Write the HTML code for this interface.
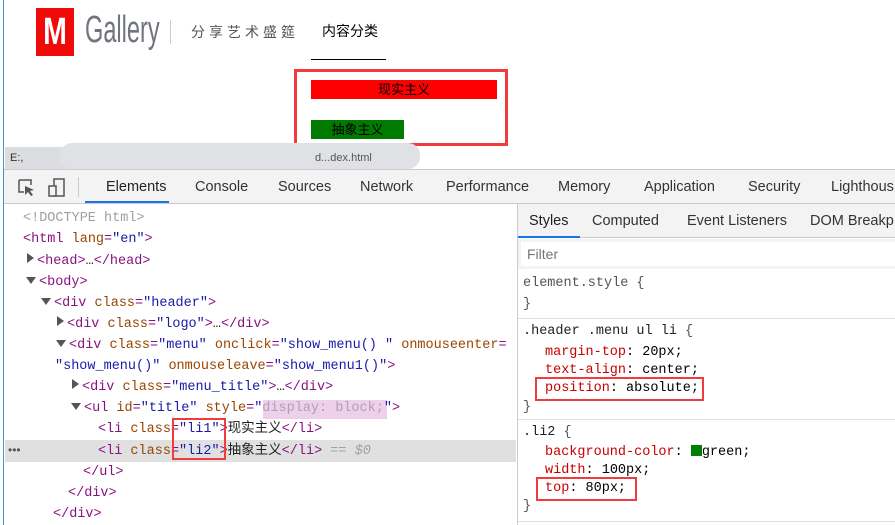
<!DOCTYPE html>
<html><head><meta charset="utf-8"><style>
*{margin:0;padding:0;box-sizing:border-box}
body{width:895px;height:525px;overflow:hidden;background:#fff;position:relative;font-family:"Liberation Sans","Noto Sans CJK SC",sans-serif}
.a{position:absolute;white-space:nowrap}
.m{font-family:"Liberation Mono","Noto Sans CJK SC",monospace;font-size:13.5px;line-height:21px}
.t{color:#881280}.n{color:#994500}.v{color:#1a1aa6}.g{color:#a0a0a0}.k{color:#222}
.p{color:#c80000}
.tab{position:absolute;top:170px;height:34px;line-height:34px;font-size:14.5px;color:#333}
.stab{position:absolute;top:205px;height:33px;line-height:33px;font-size:14.5px;color:#333}
.box{position:absolute;border:2px solid #f03c3c}
.r,.d{display:inline-block;width:0;height:0;vertical-align:1px;margin-right:3px}
.r{border-top:5px solid transparent;border-bottom:5px solid transparent;border-left:7px solid #555}
.d{border-left:5px solid transparent;border-right:5px solid transparent;border-top:7px solid #555}
</style></head><body>
<div class="a" style="left:3px;top:0;width:1px;height:525px;background:#4a90d9"></div>
<!-- header -->
<div class="a" style="left:36px;top:8px;width:38px;height:48px;background:#f00a0a"></div>
<div class="a" style="left:36px;top:8px;width:38px;height:48px;color:#fff;font-size:38px;font-weight:bold;text-align:center;line-height:48px;transform:scaleX(.75)">M</div>
<div class="a" style="left:85px;top:9px;font-size:38px;color:#70747c;transform:scaleX(.62);transform-origin:left">Gallery</div>
<div class="a" style="left:170px;top:20px;width:1px;height:24px;background:#ccc"></div>
<div class="a" style="left:191px;top:22px;font-size:14px;color:#555;letter-spacing:4px">分享艺术盛筵</div>
<div class="a" style="left:322px;top:21px;font-size:14px;color:#000">内容分类</div>
<div class="a" style="left:311px;top:59px;width:75px;height:1px;background:#000"></div>
<div class="box" style="left:294px;top:69px;width:214px;height:77px;border-width:3px"></div>
<div class="a" style="left:311px;top:80px;width:186px;height:19px;background:#f00;font-size:13px;line-height:19px;text-align:center;color:#000">现实主义</div>
<div class="a" style="left:311px;top:120px;width:93px;height:19px;background:#007a00;font-size:13px;line-height:19px;text-align:center;color:#000">抽象主义</div>
<!-- address bar -->
<div class="a" style="left:5px;top:147px;width:392px;height:23px;background:#dcdde0"></div>
<div class="a" style="left:60px;top:143px;width:360px;height:26px;background:#e0e1e4;border-radius:12px"></div>
<div class="a" style="left:10px;top:152px;font-size:11px;color:#333">E:,</div>
<div class="a" style="left:315px;top:152px;font-size:11px;color:#555">d...dex.html</div>
<!-- devtools tabs -->
<div class="a" style="left:4px;top:169px;width:891px;height:35px;background:#f3f3f3;border-top:1px solid #ccc;border-bottom:1px solid #ccc"></div>
<svg class="a" style="left:17px;top:178px" width="20" height="20"><path d="M2 2h12v5M2 2v12h5" fill="none" stroke="#555" stroke-width="1.5"/><path d="M8 8l9 4-4 1 3 4-2 1-3-4-3 3z" fill="#555"/></svg>
<svg class="a" style="left:48px;top:178px" width="20" height="20"><rect x="6" y="1" width="10" height="17" fill="none" stroke="#555" stroke-width="1.5"/><rect x="1" y="8" width="7" height="10" fill="#f3f3f3" stroke="#555" stroke-width="1.5"/></svg>
<div class="a" style="left:78px;top:177px;width:1px;height:20px;background:#ccc"></div>
<div class="tab" style="left:106px;color:#222">Elements</div>
<div class="a" style="left:85px;top:201px;width:84px;height:2px;background:#1a73e8"></div>
<div class="tab" style="left:195px">Console</div>
<div class="tab" style="left:278px">Sources</div>
<div class="tab" style="left:360px">Network</div>
<div class="tab" style="left:446px">Performance</div>
<div class="tab" style="left:558px">Memory</div>
<div class="tab" style="left:644px">Application</div>
<div class="tab" style="left:748px">Security</div>
<div class="tab" style="left:831px">Lighthous</div>
<!-- elements -->
<div class="a" style="left:5px;top:440px;width:511px;height:22px;background:#e0e0e0"></div>
<div class="a" style="left:8px;top:443px;font-size:12px;color:#555">•••</div>
<div class="a m" style="left:23px;top:208px;color:#a0a0a0">&lt;!DOCTYPE html&gt;</div>
<div class="a m" style="left:23px;top:229px"><span class="t">&lt;html</span> <span class="n">lang</span><span class="t">=</span><span class="v">"en"</span><span class="t">&gt;</span></div>
<div class="a m" style="left:27px;top:251px"><span class="r"></span><span class="t">&lt;head&gt;</span><span class="k">…</span><span class="t">&lt;/head&gt;</span></div>
<div class="a m" style="left:26px;top:272px"><span class="d"></span><span class="t">&lt;body&gt;</span></div>
<div class="a m" style="left:41px;top:293px"><span class="d"></span><span class="t">&lt;div</span> <span class="n">class</span><span class="t">=</span><span class="v">"header"</span><span class="t">&gt;</span></div>
<div class="a m" style="left:57px;top:314px"><span class="r"></span><span class="t">&lt;div</span> <span class="n">class</span><span class="t">=</span><span class="v">"logo"</span><span class="t">&gt;</span><span class="k">…</span><span class="t">&lt;/div&gt;</span></div>
<div class="a m" style="left:56px;top:335px"><span class="d"></span><span class="t">&lt;div</span> <span class="n">class</span><span class="t">=</span><span class="v">"menu"</span> <span class="n">onclick</span><span class="t">=</span><span class="v">"show_menu() "</span> <span class="n">onmouseenter</span><span class="t">=</span></div>
<div class="a m" style="left:55px;top:356px"><span class="v">"show_menu()"</span> <span class="n">onmouseleave</span><span class="t">=</span><span class="v">"show_menu1()"</span><span class="t">&gt;</span></div>
<div class="a m" style="left:72px;top:377px"><span class="r"></span><span class="t">&lt;div</span> <span class="n">class</span><span class="t">=</span><span class="v">"menu_title"</span><span class="t">&gt;</span><span class="k">…</span><span class="t">&lt;/div&gt;</span></div>
<div class="a" style="left:263px;top:400px;width:124px;height:19px;background:#efd0ec"></div>
<div class="a m" style="left:71px;top:398px"><span class="d"></span><span class="t">&lt;ul</span> <span class="n">id</span><span class="t">=</span><span class="v">"title"</span> <span class="n">style</span><span class="t">=</span><span class="v">"<span style="color:#b0a0b0">display: block;</span>"</span><span class="t">&gt;</span></div>
<div class="a m" style="left:98px;top:419px"><span class="t">&lt;li</span> <span class="n">class</span><span class="t">=</span><span class="v">"li1"</span><span class="t">&gt;</span><span class="k">现实主义</span><span class="t">&lt;/li&gt;</span></div>
<div class="a m" style="left:98px;top:441px"><span class="t">&lt;li</span> <span class="n">class</span><span class="t">=</span><span class="v">"li2"</span><span class="t">&gt;</span><span class="k">抽象主义</span><span class="t">&lt;/li&gt;</span> <span class="g">== <i>$0</i></span></div>
<div class="box" style="left:172px;top:418px;width:54px;height:42px"></div>
<div class="a m" style="left:83px;top:462px"><span class="t">&lt;/ul&gt;</span></div>
<div class="a m" style="left:68px;top:483px"><span class="t">&lt;/div&gt;</span></div>
<div class="a m" style="left:53px;top:504px"><span class="t">&lt;/div&gt;</span></div>
<!-- styles pane -->
<div class="a" style="left:517px;top:204px;width:1px;height:321px;background:#ccc"></div>
<div class="a" style="left:518px;top:204px;width:377px;height:34px;background:#f3f3f3;border-bottom:1px solid #ccc"></div>
<div class="stab" style="left:529px;color:#222">Styles</div>
<div class="a" style="left:518px;top:236px;width:62px;height:2px;background:#1a73e8"></div>
<div class="stab" style="left:592px">Computed</div>
<div class="stab" style="left:687px">Event Listeners</div>
<div class="stab" style="left:810px">DOM Breakp</div>
<div class="a" style="left:518px;top:239px;width:377px;height:30px;background:#f3f3f3"></div>
<div class="a" style="left:521px;top:242px;width:374px;height:24px;background:#fff;font-size:14px;line-height:24px;color:#777;padding-left:6px">Filter</div>
<div class="a m" style="left:523px;top:273px;color:#555">element.style {</div>
<div class="a m" style="left:523px;top:294px;color:#555">}</div>
<div class="a" style="left:518px;top:318px;width:377px;height:1px;background:#ddd"></div>
<div class="a m" style="left:523px;top:321px;color:#222">.header .menu ul li <span style="color:#555">{</span></div>
<div class="a m" style="left:545px;top:342px"><span class="p">margin-top</span>: 20px;</div>
<div class="a m" style="left:545px;top:360px"><span class="p">text-align</span>: center;</div>
<div class="a m" style="left:545px;top:378px"><span class="p">position</span>: absolute;</div>
<div class="box" style="left:535px;top:377px;width:169px;height:24px"></div>
<div class="a m" style="left:523px;top:397px;color:#555">}</div>
<div class="a" style="left:518px;top:419px;width:377px;height:1px;background:#ddd"></div>
<div class="a m" style="left:523px;top:422px;color:#222">.li2 <span style="color:#555">{</span></div>
<div class="a m" style="left:545px;top:442px"><span class="p">background-color</span>: <span style="display:inline-block;width:11px;height:11px;background:#008000;vertical-align:-1px"></span>green;</div>
<div class="a m" style="left:545px;top:460px"><span class="p">width</span>: 100px;</div>
<div class="a m" style="left:545px;top:478px"><span class="p">top</span>: 80px;</div>
<div class="box" style="left:536px;top:477px;width:101px;height:24px"></div>
<div class="a m" style="left:523px;top:496px;color:#555">}</div>
<div class="a" style="left:518px;top:521px;width:377px;height:1px;background:#ddd"></div>
</body></html>
